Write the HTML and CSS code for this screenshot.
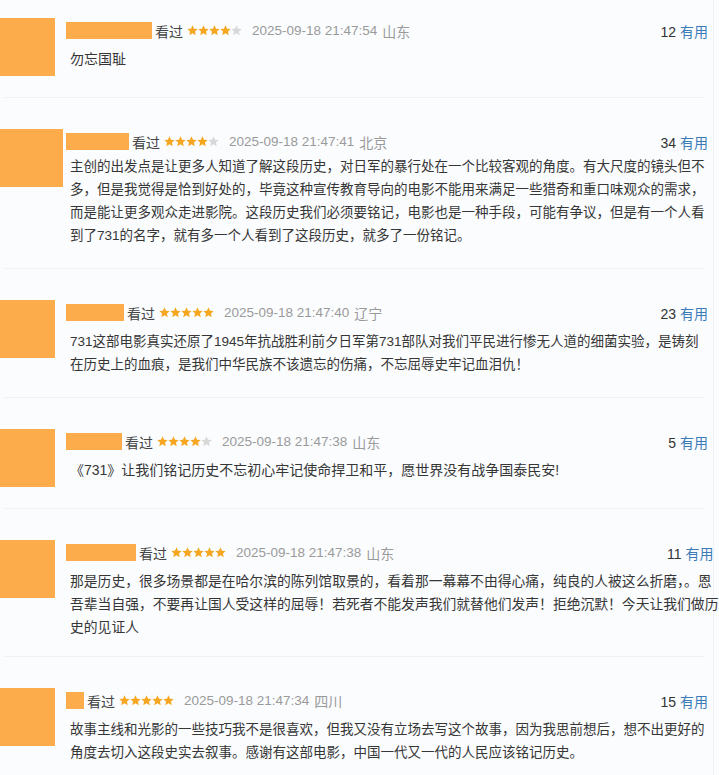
FILE: index.html
```html
<!DOCTYPE html>
<html lang="zh-CN">

<head>
  <meta charset="UTF-8">
  <meta name="viewport" content="width=device-width, initial-scale=1.0">
  <title>短评</title>
  <link rel="stylesheet" href="styles.css">
</head>

<body>
  <svg class="defs" width="0" height="0">
    <symbol id="star" viewBox="0 0 24 24">
      <path d="M12 .8l3.4 7.2 7.9.9-5.9 5.4 1.6 7.8L12 18.2l-7 3.9 1.6-7.8L.7 8.9l7.9-.9z" />
    </symbol>
  </svg>

  <div class="list">
    <!-- comment 1 -->
    <div class="comment first">
      <div class="avatar"></div>
      <div class="main">
        <div class="header">
          <span class="name" style="width: 86px"></span>
          <span class="status">看过</span>
          <span class="stars">
            <svg class="on"><use href="#star" /></svg><svg class="on"><use href="#star" /></svg><svg class="on"><use href="#star" /></svg><svg class="on"><use href="#star" /></svg><svg><use href="#star" /></svg>
          </span>
          <span class="time">2025-09-18 21:47:54</span>
          <span class="place">山东</span>
          <span class="votes"><b>12</b> 有用</span>
        </div>
        <p class="body">勿忘国耻</p>
      </div>
    </div>
    <div class="divider"></div>

    <!-- comment 2 -->
    <div class="comment tight">
      <div class="avatar wide"></div>
      <div class="main">
        <div class="header">
          <span class="name" style="width: 63px"></span>
          <span class="status">看过</span>
          <span class="stars">
            <svg class="on"><use href="#star" /></svg><svg class="on"><use href="#star" /></svg><svg class="on"><use href="#star" /></svg><svg class="on"><use href="#star" /></svg><svg><use href="#star" /></svg>
          </span>
          <span class="time">2025-09-18 21:47:41</span>
          <span class="place">北京</span>
          <span class="votes"><b>34</b> 有用</span>
        </div>
        <p class="body">主创的出发点是让更多人知道了解这段历史，对日军的暴行处在一个比较客观的角度。有大尺度的镜头但不<br>多，但是我觉得是恰到好处的，毕竟这种宣传教育导向的电影不能用来满足一些猎奇和重口味观众的需求，<br>而是能让更多观众走进影院。这段历史我们必须要铭记，电影也是一种手段，可能有争议，但是有一个人看<br>到了731的名字，就有多一个人看到了这段历史，就多了一份铭记。</p>
      </div>
    </div>
    <div class="divider"></div>

    <!-- comment 3 -->
    <div class="comment small">
      <div class="avatar"></div>
      <div class="main">
        <div class="header">
          <span class="name" style="width: 58px"></span>
          <span class="status">看过</span>
          <span class="stars">
            <svg class="on"><use href="#star" /></svg><svg class="on"><use href="#star" /></svg><svg class="on"><use href="#star" /></svg><svg class="on"><use href="#star" /></svg><svg class="on"><use href="#star" /></svg>
          </span>
          <span class="time">2025-09-18 21:47:40</span>
          <span class="place">辽宁</span>
          <span class="votes"><b>23</b> 有用</span>
        </div>
        <p class="body">731这部电影真实还原了1945年抗战胜利前夕日军第731部队对我们平民进行惨无人道的细菌实验，是铸刻<br>在历史上的血痕，是我们中华民族不该遗忘的伤痛，不忘屈辱史牢记血泪仇！</p>
      </div>
    </div>
    <div class="divider"></div>

    <!-- comment 4 -->
    <div class="comment">
      <div class="avatar"></div>
      <div class="main">
        <div class="header">
          <span class="name" style="width: 56px"></span>
          <span class="status">看过</span>
          <span class="stars">
            <svg class="on"><use href="#star" /></svg><svg class="on"><use href="#star" /></svg><svg class="on"><use href="#star" /></svg><svg class="on"><use href="#star" /></svg><svg><use href="#star" /></svg>
          </span>
          <span class="time">2025-09-18 21:47:38</span>
          <span class="place">山东</span>
          <span class="votes"><b>5</b> 有用</span>
        </div>
        <p class="body">《731》让我们铭记历史不忘初心牢记使命捍卫和平，愿世界没有战争国泰民安!</p>
      </div>
    </div>
    <div class="divider"></div>

    <!-- comment 5 -->
    <div class="comment mid">
      <div class="avatar"></div>
      <div class="main">
        <div class="header">
          <span class="name" style="width: 70px"></span>
          <span class="status">看过</span>
          <span class="stars">
            <svg class="on"><use href="#star" /></svg><svg class="on"><use href="#star" /></svg><svg class="on"><use href="#star" /></svg><svg class="on"><use href="#star" /></svg><svg class="on"><use href="#star" /></svg>
          </span>
          <span class="time">2025-09-18 21:47:38</span>
          <span class="place">山东</span>
          <span class="votes"><b>11</b> 有用</span>
        </div>
        <p class="body">那是历史，很多场景都是在哈尔滨的陈列馆取景的，看着那一幕幕不由得心痛，纯良的人被这么折磨，。恩<br>吾辈当自强，不要再让国人受这样的屈辱！若死者不能发声我们就替他们发声！拒绝沉默！今天让我们做历<br>史的见证人</p>
      </div>
    </div>
    <div class="divider"></div>

    <!-- comment 6 -->
    <div class="comment small">
      <div class="avatar"></div>
      <div class="main">
        <div class="header">
          <span class="name" style="width: 18px"></span>
          <span class="status">看过</span>
          <span class="stars">
            <svg class="on"><use href="#star" /></svg><svg class="on"><use href="#star" /></svg><svg class="on"><use href="#star" /></svg><svg class="on"><use href="#star" /></svg><svg class="on"><use href="#star" /></svg>
          </span>
          <span class="time">2025-09-18 21:47:34</span>
          <span class="place">四川</span>
          <span class="votes"><b>15</b> 有用</span>
        </div>
        <p class="body">故事主线和光影的一些技巧我不是很喜欢，但我又没有立场去写这个故事，因为我思前想后，想不出更好的<br>角度去切入这段史实去叙事。感谢有这部电影，中国一代又一代的人民应该铭记历史。</p>
      </div>
    </div>
  </div>
</body>

</html>
```

FILE: styles.css
```css
body {
  margin: 0;
  background-color: #fbfcfe;
  font-family: "Liberation Sans", "Noto Sans CJK SC", sans-serif;
  color: #363636;
  overflow: hidden;
}

.defs {
  position: absolute;
}

.list {
  width: 713px;
  height: 775px;
  border-right: 1px solid #eff1f5;
}

.comment {
  display: flex;
  padding: 31px 0 21px;
}

.comment.first {
  padding-top: 18px;
}

.comment.mid {
  padding-bottom: 17px;
}

.avatar {
  flex: none;
  width: 55px;
  height: 58px;
  margin-right: 11px;
  background-color: #fdac4b;
}

.avatar.wide {
  width: 63px;
  margin-right: 3px;
}

.main {
  flex: 1;
  padding-top: 1px;
}

.header {
  display: flex;
  align-items: center;
  height: 23px;
  font-size: 14px;
  padding-right: 5px;
}

.name {
  height: 17px;
  margin-right: 3px;
  background-color: #fdac4b;
}

.status {
  color: #454545;
  margin-right: 4px;
}

.stars {
  display: flex;
  margin-right: 10px;
}

.stars svg {
  width: 11px;
  height: 11px;
  fill: #d8d8d8;
}

.stars svg.on {
  fill: #f6a721;
}

.time,
.place {
  color: #9a9a9a;
}

.time {
  font-size: 13.5px;
}

.place {
  margin-left: 5px;
}

.votes {
  margin-left: auto;
  color: #3a7bb8;
}

.votes b {
  font-weight: normal;
  color: #333;
}

.body {
  margin: 6px 0 0;
  padding-left: 4px;
  font-size: 14px;
  line-height: 23px;
  white-space: nowrap;
}

.comment.tight .body {
  margin-top: 2px;
  font-size: 13.5px;
}

.comment.small .body {
  font-size: 13.5px;
}

.comment.mid .body {
  font-size: 13.8px;
}

.divider {
  height: 1px;
  margin: 0 8px 0 5px;
  background-color: #eef0f4;
}
```
